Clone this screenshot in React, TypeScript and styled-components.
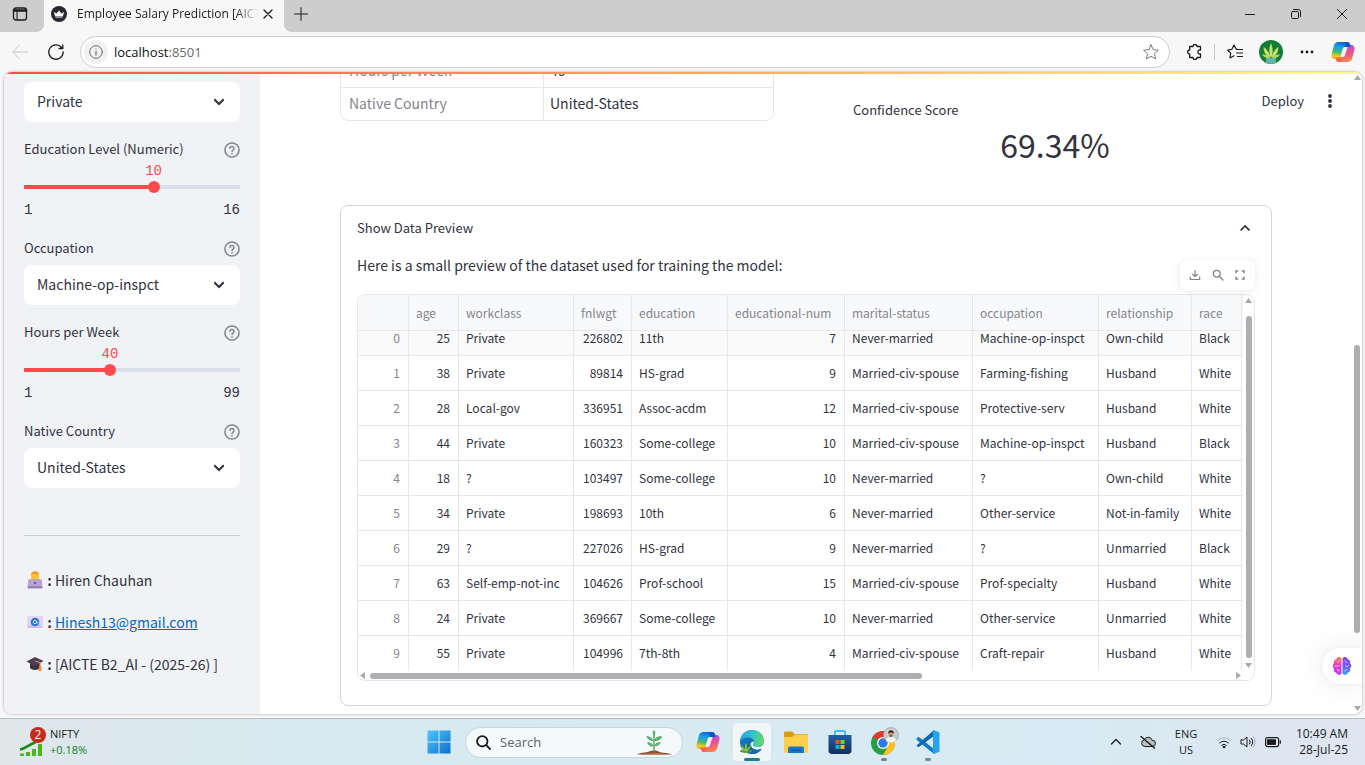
import React, { useLayoutEffect, useRef, useState } from "react";
import styled, { createGlobalStyle, css } from "styled-components";

const appFont = `"Noto Sans CJK JP", "Noto Sans", sans-serif`;
const shellFont = `"Open Sans", "Noto Sans", sans-serif`;
const monoFont = `"Liberation Mono", monospace`;
const ink = "#31333f";

const GlobalStyle = createGlobalStyle`
  *, *::before, *::after { box-sizing: border-box; }
  html, body, #root { height: 100%; }
  body { margin: 0; overflow: hidden; background: #f7f7f7; font-family: ${appFont}; color: ${ink}; }
  button, select, input { font: inherit; color: inherit; }
  button { border: 0; padding: 0; background: none; }
  svg { display: block; flex: none; }
`;

const Screen = styled.div`
  display: flex;
  flex-direction: column;
  height: 100vh;
`;

/* ---------- browser chrome ---------- */

const TabStrip = styled.header`
  display: flex;
  flex: none;
  height: 32px;
  background: #cdcdcd;
  font-family: ${shellFont};
`;

const TabActions = styled.button`
  display: grid;
  place-items: center;
  width: 44px;
  padding: 0 4px 4px 0;
  background: #cdcdcd;
  border-bottom-right-radius: 8px;
`;

const TabBackdrop = styled.div`
  display: flex;
  background: #f7f7f7;
`;

const StripBackdrop = styled(TabBackdrop)`
  flex: 1;
`;

const Tab = styled.div`
  display: flex;
  align-items: center;
  gap: 10px;
  width: 240px;
  padding: 0 8px 4px 7px;
`;

const TabTitle = styled.span`
  flex: 1;
  overflow: hidden;
  margin-right: -8px;
  white-space: nowrap;
  font-size: 12px;
  line-height: 16px;
  color: #1b1b1b;
  mask-image: linear-gradient(to right, #000 88%, transparent);
`;

const TabClose = styled.button`
  display: grid;
  place-items: center;
  width: 16px;
  height: 16px;
`;

const StripRest = styled.div`
  display: flex;
  flex: 1;
  justify-content: space-between;
  background: #cdcdcd;
  border-bottom-left-radius: 8px;
`;

const StripButton = styled.button<{ $wide?: boolean }>`
  display: grid;
  place-items: center;
  width: ${(p) => (p.$wide ? 46 : 34)}px;
  height: 28px;
`;

const WindowButtons = styled.div`
  display: flex;
`;

const NavBar = styled.nav`
  display: flex;
  flex: none;
  align-items: center;
  height: 40px;
  padding: 0 4px 0 2px;
  font-family: ${shellFont};
`;

const NavButton = styled.button`
  display: grid;
  place-items: center;
  flex: none;
  width: 36px;
  height: 32px;
`;

const Omnibox = styled.div`
  display: flex;
  flex: 1;
  align-items: center;
  height: 32px;
  margin: 0 7px 0 6px;
  padding: 0 10px 0 3px;
  border: 1px solid #cfcfcf;
  border-radius: 16px;
  background: #fff;
`;

const SiteInfo = styled.button`
  display: grid;
  place-items: center;
  width: 24px;
  height: 24px;
  border-radius: 12px;
  background: #f1f1f1;
`;

const Address = styled.span`
  flex: 1;
  margin-left: 6px;
  font-size: 13px;
  line-height: 20px;
  color: #101010;
  span { color: #6a6a6a; }
`;

const Divider = styled.span`
  width: 1px;
  height: 16px;
  margin: 0 2px 0 1px;
  background: #c8c8c8;
`;

/* ---------- page frame ---------- */

const Page = styled.div`
  position: relative;
  display: flex;
  flex-direction: column;
  flex: 1;
  min-height: 0;
  margin: 0 3px 4px 4px;
  border-radius: 8px;
  overflow: hidden;
  background: #fff;
  box-shadow: 0 0 2px 1px #cdcdcd;
`;

const TopStripe = styled.div`
  flex: none;
  height: 2px;
  background: linear-gradient(90deg, #ff4b4b, #fffd80);
`;

const PageColumns = styled.div`
  display: flex;
  flex: 1;
  min-height: 0;
`;

/* ---------- sidebar ---------- */

const Sidebar = styled.aside`
  flex: none;
  width: 256px;
  padding: 8px 20px;
  overflow: hidden;
  background: #f0f2f6;
`;

const FieldLabel = styled.div`
  display: flex;
  align-items: center;
  justify-content: space-between;
  height: 20px;
  font-size: 13px;
  line-height: 18px;
  label { padding-bottom: 2px; }
`;

const HelpButton = styled.button`
  width: 16px;
  height: 16px;
`;

const SelectWrap = styled.div`
  position: relative;
  margin-bottom: 18px;
  ${FieldLabel} + & { margin-top: 6px; }
  svg { position: absolute; right: 16px; top: 15px; pointer-events: none; }
`;

const Select = styled.select`
  display: block;
  width: 100%;
  height: 40px;
  padding: 0 40px 2px 13px;
  appearance: none;
  border: 0;
  border-radius: 8px;
  background: #fff;
  font-size: 14px;
`;

const SliderBox = styled.div`
  height: 59px;
  margin-bottom: 20px;
  padding-top: 3px;
  font-family: ${monoFont};
  font-size: 14px;
`;

const SliderValue = styled.output<{ $at: number }>`
  display: block;
  width: 40px;
  margin-left: calc(${(p) => p.$at}% - 20px);
  line-height: 16px;
  text-align: center;
  color: #ff4b4b;
`;

const SliderRail = styled.div<{ $at: number }>`
  margin: 2px 0 7px;
  height: 12px;
  border-radius: 2px;
  background: linear-gradient(to right, #ff4b4b ${(p) => p.$at}%, #d8dfe8 ${(p) => p.$at}%) center / 100% 4px no-repeat;
`;

const Range = styled.input`
  display: block;
  width: calc(100% + 12px);
  height: 12px;
  margin: 0 -6px;
  appearance: none;
  background: transparent;
  &::-webkit-slider-thumb {
    appearance: none;
    width: 12px;
    height: 12px;
    border-radius: 6px;
    background: #ff4b4b;
  }
`;

const SliderEnds = styled.div`
  display: flex;
  justify-content: space-between;
  line-height: 20px;
`;

const Rule = styled.hr`
  margin: 47px 0 32px;
  border: 0;
  border-top: 1px solid #c9cbd1;
`;

const Credit = styled.p`
  display: flex;
  align-items: center;
  margin: 0 0 18px;
  font-size: 14px;
  line-height: 24px;
  white-space: pre;
  svg { margin-left: 2px; }
  a { color: #0068c9; text-decoration: underline; }
`;

/* ---------- main column ---------- */

const Main = styled.main`
  position: relative;
  display: flex;
  flex: 1;
  min-width: 0;
  overflow: hidden;
`;

const MainContent = styled.div`
  flex: 1;
  min-width: 0;
  margin-top: -20px;
  padding: 0 80px;
`;

const TwoColumns = styled.div`
  display: grid;
  grid-template-columns: 1fr 1fr;
  gap: 64px;
`;

const SummaryTable = styled.table`
  width: 100%;
  align-self: start;
  border: 1px solid #e6e7e9;
  border-radius: 8px;
  border-spacing: 0;
  font-size: 14px;
  line-height: 30px;
  th {
    width: 203px;
    padding: 0 8px 2px;
    border-right: 1px solid #e6e7e9;
    font-weight: 400;
    text-align: left;
    color: #84858c;
  }
  td { padding: 0 6px 2px; }
  tr + tr > * { border-top: 1px solid #e6e7e9; }
`;

const Metric = styled.div`
  padding: 46px 15px 0;
`;

const MetricLabel = styled.div`
  font-size: 13px;
  line-height: 20px;
`;

const MetricValue = styled.div`
  margin-top: 2px;
  font-size: 32px;
  line-height: 44px;
  text-align: center;
`;

const Expander = styled.details`
  margin-top: 39px;
  padding: 0 16px 24px;
  border: 1px solid #d6d6d9;
  border-radius: 8px;
`;

const ExpanderTitle = styled.summary`
  display: flex;
  align-items: center;
  justify-content: space-between;
  height: 44px;
  padding-right: 4px;
  list-style: none;
  font-size: 13px;
  line-height: 20px;
`;

const Intro = styled.p`
  margin: 3px 0 17px;
  font-size: 14px;
  line-height: 24px;
`;

const FrameShell = styled.div`
  position: relative;
  display: grid;
  grid-template-columns: minmax(0, 1fr) 11px;
  grid-template-rows: 376px 9px;
  border: 1px solid #e6e7e9;
  border-radius: 8px;
`;

const FrameTools = styled.div`
  position: absolute;
  right: -1px;
  top: -35px;
  display: flex;
  align-items: center;
  justify-content: space-between;
  width: 75px;
  height: 30px;
  padding: 0 8px;
  border-radius: 8px;
  background: #fff;
  box-shadow: 0 1px 8px rgba(49, 51, 63, 0.1);
`;

const ToolButton = styled.button`
  display: grid;
  place-items: center;
  width: 14px;
  height: 20px;
`;

const TableScroller = styled.div`
  overflow: hidden;
  border-top-left-radius: 8px;
`;

const DataTable = styled.table`
  table-layout: fixed;
  width: 960px;
  border-spacing: 0;
  font-size: 12px;
`;

const cell = css`
  height: 35px;
  padding: 0 8px 0 7px;
  border-right: 1px solid #e6e7ea;
  border-bottom: 1px solid #e6e7ea;
  font-weight: 400;
  line-height: 20px;
  text-align: left;
  white-space: nowrap;
`;

const HeadCell = styled.th`
  ${cell}
  position: sticky;
  top: 0;
  height: 36px;
  background: #f8f9fb;
  color: #84858c;
`;

const IndexCell = styled.th`
  ${cell}
  text-align: right;
  color: #84858c;
`;

const BodyCell = styled.td<{ $num?: boolean }>`
  ${cell}
  text-align: ${(p) => (p.$num ? "right" : "left")};
`;

const BodyRow = styled.tr`
  &:first-child > * { background: #fafafa; }
  &:last-child > * { border-bottom-color: transparent; }
`;

const Scrollbar = styled.div<{ $row?: boolean }>`
  display: flex;
  flex: none;
  flex-direction: ${(p) => (p.$row ? "row" : "column")};
  align-items: center;
  padding: ${(p) => (p.$row ? "0 1px" : "2px 0")};
  gap: 4px;
`;

const Track = styled.div<{ $row?: boolean }>`
  display: flex;
  flex: 1;
  flex-direction: ${(p) => (p.$row ? "row" : "column")};
`;

const Thumb = styled.span<{ $grow: number; $row?: boolean }>`
  flex: ${(p) => p.$grow} 0 0;
  ${(p) => (p.$row ? "height: 6px;" : "width: 6px;")}
  border-radius: 3px;
  background: #aeadb2;
`;

const Spare = styled.span<{ $grow: number }>`
  flex: ${(p) => p.$grow} 0 0;
`;

const PageScroll = styled(Scrollbar)`
  width: 10px;
  padding: 0 0 2px;
`;

const AppHeader = styled.div`
  position: absolute;
  top: 11px;
  right: 24px;
  display: flex;
  align-items: center;
  gap: 18px;
  font-size: 13px;
`;

const HeaderButton = styled.button`
  line-height: 32px;
`;

const Assistant = styled.button`
  position: absolute;
  right: 0;
  bottom: 30px;
  display: flex;
  align-items: center;
  width: 40px;
  height: 36px;
  padding-left: 10px;
  border-radius: 18px 0 0 18px;
  background: #fff;
  box-shadow: 0 0 30px rgba(0, 0, 0, 0.09), 0 0 4px rgba(0, 0, 0, 0.05);
`;

/* ---------- taskbar ---------- */

const Taskbar = styled.footer`
  display: grid;
  grid-template-columns: 1fr auto 1fr;
  align-items: center;
  flex: none;
  height: 47px;
  border-top: 1px solid #b3bec4;
  background: linear-gradient(90deg, #dfe7e9, #d7e9f0 20%, #d8eaf3 80%, #dfe5f0);
  font-family: ${shellFont};
  font-size: 12px;
  line-height: 16px;
  color: #1b1b1b;
`;

const Widget = styled.button`
  display: flex;
  align-items: center;
  gap: 4px;
  padding-left: 18px;
  text-align: left;
`;

const WidgetText = styled.span`
  display: grid;
  font-size: 11px;
  span { color: #12801c; }
`;

const Apps = styled.div`
  display: flex;
  align-items: center;
  margin-left: 2px;
`;

const AppButton = styled.button<{ $active?: boolean; $open?: boolean }>`
  position: relative;
  display: grid;
  place-items: center;
  width: 38px;
  height: 38px;
  margin: 0 3px;
  border-radius: 4px;
  ${(p) => p.$active && "background: #f0f6fa; box-shadow: 0 0 1px 1px #dde6ea;"}
  ${(p) =>
    (p.$active || p.$open) &&
    css`
      &::after {
        content: "";
        position: absolute;
        bottom: 0;
        width: ${p.$active ? 16 : 6}px;
        height: 3px;
        border-radius: 2px;
        background: ${p.$active ? "#1b7f93" : "#7c8488"};
      }
    `}
`;

const SearchBox = styled.label`
  display: flex;
  align-items: center;
  width: 218px;
  height: 31px;
  margin: 0 3px 0 4px;
  padding: 0 8px 0 10px;
  border: 1px solid #c4d4db;
  border-radius: 16px;
  background: #f4f9fb;
`;

const SearchInput = styled.input`
  flex: 1;
  min-width: 0;
  margin-left: 9px;
  padding: 0;
  border: 0;
  background: none;
  font-size: 13px;
  &::placeholder { color: #5d6366; opacity: 1; }
`;

const Tray = styled.div`
  display: flex;
  align-items: center;
  justify-content: flex-end;
  padding-right: 17px;
  text-align: center;
`;

const TrayButton = styled.button<{ $w: number }>`
  display: grid;
  place-items: center;
  width: ${(p) => p.$w}px;
  height: 38px;
`;

const TrayText = styled.button<{ $w: number; $right?: boolean }>`
  display: grid;
  width: ${(p) => p.$w}px;
  font-size: ${(p) => (p.$right ? 12 : 11)}px;
  text-align: ${(p) => (p.$right ? "right" : "center")};
`;

/* ---------- icons ---------- */

type IconProps = {
  size?: number;
  color?: string;
  width?: number;
  children: React.ReactNode;
  box?: number;
};

const Icon = ({ size = 16, color = "#1b1b1b", width = 1, box = 16, children }: IconProps) => (
  <svg
    width={size}
    height={size}
    viewBox={`0 0 ${box} ${box}`}
    fill="none"
    stroke={color}
    strokeWidth={width}
    strokeLinecap="round"
    strokeLinejoin="round"
    aria-hidden="true"
  >
    {children}
  </svg>
);

const Arrow = ({ dir }: { dir: "up" | "down" | "left" | "right" }) => {
  const d = {
    up: "M3.5 1 7 6H0z",
    down: "M0 1h7L3.5 6z",
    left: "M6 0v7L1 3.5z",
    right: "M1 0v7l5-3.5z",
  }[dir];
  return (
    <svg width="7" height="7" viewBox="0 0 7 7" aria-hidden="true">
      <path d={d} fill="#a9a8ad" />
    </svg>
  );
};

const Help = () => (
  <Icon box={24} width={2.3} color="#84868f">
    <circle cx="12" cy="12" r="10.6" />
    <path d="M8.800 9.300a3.200 3.200 0 0 1 6.300.6c0 2-3 2.600-3 4.300" />
    <path d="M12 17.700h.01" strokeWidth="2.6" />
  </Icon>
);

const Chevron = ({ up }: { up?: boolean }) => (
  <Icon size={up ? 12 : 10} box={10} color={ink} width={up ? 1.4 : 2}>
    <path d={up ? "M1.8 6.5 5 3.3l3.200 3.200" : "M1 3l4 4 4-4"} strokeLinecap="square" strokeLinejoin="miter" />
  </Icon>
);

const Copilot = ({ id }: { id: string }) => {
  const ribbon =
    "M7.600 2h8.300c1.500 0 2.400.8 2.900 2.300L19.700 7h-2.900c-1.900 0-2.900.9-3.400 2.700l-1.900 6.200c-.6 2.100-1.600 3.300-3.700 3.300H4.200C1.300 19.200-.1 17 .6 14.200l2.300-8.700C3.600 3.200 5.100 2 7.600 2z";
  return (
    <svg width="24" height="24" viewBox="0 0 24 24" aria-hidden="true">
      <defs>
        <linearGradient id={`${id}a`} x1=".5" y1="0" x2=".3" y2="1">
          <stop offset="0" stopColor="#1462d6" />
          <stop offset=".3" stopColor="#18a3e6" />
          <stop offset=".6" stopColor="#45b96a" />
          <stop offset=".85" stopColor="#f3cf1f" />
          <stop offset="1" stopColor="#f7a51f" />
        </linearGradient>
        <linearGradient id={`${id}b`} x1=".6" y1="1" x2=".4" y2="0">
          <stop offset="0" stopColor="#a955ef" />
          <stop offset=".5" stopColor="#f04f8a" />
          <stop offset="1" stopColor="#f7894a" />
        </linearGradient>
      </defs>
      <path d={ribbon} fill={`url(#${id}b)`} transform="rotate(180 12 12)" />
      <path d={ribbon} fill={`url(#${id}a)`} />
      <path d="M14 2h2c1.500 0 2.300.8 2.800 2.300L19.700 7h-2.900c-1.900 0-2.900.9-3.400 2.500z" fill="#1254bb" />
      <path d="M10 22H8c-1.500 0-2.300-.8-2.800-2.300L4.600 17.400h2.600c1.900 0 2.900-.9 3.400-2.700z" fill="#f2664e" />
      <path d="M9.300 16.700l2.400-8c.5-1.400 1.500-2 3.300-1.700h1.600l-2.600 8.300c-.5 1.400-1.600 2-3.200 1.700z" fill="#fff" opacity=".9" />
    </svg>
  );
};

const EdgeLogo = () => (
  <svg width="26" height="26" viewBox="0 0 26 26" aria-hidden="true">
    <defs>
      <linearGradient id="edgeTop" x1="0" y1=".4" x2="1" y2=".5">
        <stop offset="0" stopColor="#2c9fe2" />
        <stop offset=".5" stopColor="#31c3cf" />
        <stop offset="1" stopColor="#66da5d" />
      </linearGradient>
      <linearGradient id="edgeLow" x1="0" y1="0" x2="1" y2="1">
        <stop offset="0" stopColor="#1687cf" />
        <stop offset="1" stopColor="#0f5299" />
      </linearGradient>
    </defs>
    <circle cx="13" cy="13" r="12" fill="url(#edgeLow)" />
    <path d="M1 12.500C1.500 5.800 6.500 1 13 1c7 0 12 5 12 10.500 0 4-3 6.500-6.500 6.500-3 0-4.500-1-4.500-2 0-.8 1-1.200 1-3 0-2.500-2.300-4.600-5.700-4.600C5.200 8.400 2 10 1 12.500z" fill="url(#edgeTop)" />
    <path d="M14 16c0 1 1.500 2 4.500 2 3.500 0 6.500-2 6.500-6v9l-3.500-1c-2 .8-4.500 1-6.200.1-2.600-1-4.300-3.600-3.800-5.200.4-1.300 1.500-2.400 3-2.400.8 1.500-.5 2.700-.5 3.500z" fill="#e9f5fa" />
    <path d="M11 12c-1 4 1.500 8 6 9 1.800.3 3.800 0 5.500-1C19 25 14 26 11 24c-3-3-3-9 0-12z" fill="#1565b0" />
    <g stroke="#4f9a2f" strokeWidth="2" strokeLinecap="round">
      <path d="M7 22v-7M6 21l-3.500-4M8 21l3.500-4M6 23l-4-1M8 23l4-1" />
    </g>
    <path d="M7 22v-6M6 21.500l-2.500-3M8 21.500l2.500-3" stroke="#b8df6a" strokeLinecap="round" />
  </svg>
);

const ExplorerLogo = () => (
  <svg width="26" height="26" viewBox="0 0 26 26" aria-hidden="true">
    <path d="M1 4c0-1 .6-1.500 1.500-1.500H9l2.500 2.500H24c.7 0 1 .4 1 1v4H1z" fill="#dc9a12" />
    <path d="M1 8h8.500L12 5.500h12c.6 0 1 .4 1 1v16c0 .8-.5 1.300-1.300 1.300H2.300C1.500 23.800 1 23.300 1 22.500z" fill="#fdcf4a" />
    <path d="M5 24v-4.500c0-1.300.9-2 2-2h12c1.200 0 2 .8 2 2V24z" fill="#1477c9" />
    <path d="M8 21h10" stroke="#0e5da6" strokeWidth="1.500" />
  </svg>
);

const StoreLogo = () => (
  <svg width="26" height="26" viewBox="0 0 26 26" aria-hidden="true">
    <defs>
      <linearGradient id="bag" x1="0" y1="0" x2="0" y2="1">
        <stop offset="0" stopColor="#2262a0" />
        <stop offset="1" stopColor="#123059" />
      </linearGradient>
    </defs>
    <path d="M8 7V3.500C8 2.700 8.500 2 9.500 2h7c1 0 1.500.7 1.500 1.500V7" fill="none" stroke="#42bdf0" strokeWidth="2" />
    <path d="M1.500 6h23v15.500c0 2-1.300 3.500-3.500 3.500H5c-2.200 0-3.500-1.500-3.500-3.500z" fill="url(#bag)" />
    <path d="M8.500 11h4v4h-4z" fill="#f1511b" />
    <path d="M13.500 11h4v4h-4z" fill="#80cc28" />
    <path d="M8.500 16h4v4h-4z" fill="#00adef" />
    <path d="M13.500 16h4v4h-4z" fill="#fbbc09" />
  </svg>
);

const ChromeLogo = () => (
  <svg width="30" height="30" viewBox="0 0 30 30" aria-hidden="true">
    <circle cx="14" cy="16" r="12" fill="#2a9d47" />
    <path d="M14 16 3.600 10A12 12 0 0 1 24.400 10z" fill="#e23b2e" />
    <path d="M14 10h10.400A12 12 0 0 1 14 28l5.200-9z" fill="#fcc31e" />
    <circle cx="14" cy="16" r="6" fill="#fff" />
    <circle cx="14" cy="16" r="4.700" fill="#2f78e8" />
    <circle cx="22" cy="8" r="7.500" fill="#c9cccb" stroke="#8f9796" strokeWidth=".6" />
    <path d="M17 13.500c.5-2.600 2.500-3.400 5-3.400s4.500.8 5 3.400c-2.500 2.700-7.500 2.700-10 0z" fill="#f4f4f2" />
    <circle cx="22" cy="7" r="2.700" fill="#c59478" />
    <path d="M19.200 6.500c-.3-4.300 5.900-4.300 5.600 0-.8-1.500-4.800-1.500-5.600 0zM20.500 8.500h3l-1.500 1.500z" fill="#2b2422" />
  </svg>
);

const CodeLogo = () => (
  <svg width="26" height="26" viewBox="0 0 26 26" aria-hidden="true">
    <path d="M1.500 9.500 3.500 7.800 19 20v5L1.500 10.800z" fill="#0f7cc4" />
    <path d="M1.500 16.500 19 1v6L3.500 18.200z" fill="#0a69ae" />
    <path d="M19 1l5.500 2.500v19L19 25l-1-1V2z" fill="#27a3ee" />
  </svg>
);

const StartLogo = () => (
  <svg width="24" height="24" viewBox="0 0 24 24" aria-hidden="true">
    <defs>
      <linearGradient id="win" x1="0" y1="0" x2="24" y2="24" gradientUnits="userSpaceOnUse">
        <stop offset="0" stopColor="#4fc9fb" />
        <stop offset="1" stopColor="#0a6ccf" />
      </linearGradient>
    </defs>
    <path d="M.5.500h11v11H.5zM12.500.500h11v11h-11zM.5 12.500h11v11H.5zM12.500 12.500h11v11h-11z" fill="url(#win)" />
  </svg>
);

const Sprout = () => (
  <svg width="38" height="26" viewBox="0 0 38 26" aria-hidden="true">
    <path d="M1 25.500c3-2 9-1.500 12-3 3-1.500 8-1.200 10 .3 3 1.500 9 .7 13 2.700z" fill="#8c4f31" />
    <path d="M4 25.500c4-1.300 9-.8 12-1.500 5-1 10 .3 16 1.500z" fill="#b06b43" />
    <path d="M18 23V6" stroke="#3f8f4a" strokeWidth="1.200" />
    <path d="M18 7.500c-2-2.200-1.600-4.400 0-6.500 1.600 2.100 2 4.300 0 6.500zM17.300 12c-3.500 0-5.600-1.800-7-5 3.800.5 6.500 2 7 5zM18.700 12c0-3 2.600-5 7.300-4.800-1 3.100-3.500 4.900-7.300 4.800zM17.300 17.500c-3 .3-5-1.200-6.300-4.200 3.700-.3 5.800 1.200 6.300 4.200zM18.700 17c.3-2.800 2.300-4.100 6-3.700-1 2.700-3.200 4.100-6 3.700z" fill="#46a560" />
    <path d="M18 6.500V3M16 10.500l-3.500-2M20 10.700l3.500-2M16 16l-3-1.700M20 15.800l3-1.500" stroke="#8fd39b" strokeWidth=".7" />
  </svg>
);

const Stocks = () => (
  <svg width="28" height="32" viewBox="0 0 28 32" aria-hidden="true">
    <path d="M2 23.500c6-1 8-4.500 16-7.500" fill="none" stroke="#1f8a1b" strokeWidth="2.500" />
    <path d="M2 27.500h4V30H2zM8 26h4v4H8zM14 23h4v7h-4zM20 18h4v12h-4z" fill="#4bb51d" />
    <circle cx="20" cy="9" r="8" fill="#c42b1c" />
    <text x="20" y="13" textAnchor="middle" fontSize="12" fontFamily="Open Sans, sans-serif" fill="#fff">2</text>
  </svg>
);

const Brain = () => (
  <svg width="20" height="20" viewBox="0 0 20 20" aria-hidden="true">
    <defs>
      <linearGradient id="lobeL" x1="0" y1="0" x2="0" y2="1">
        <stop offset="0" stopColor="#f7884f" />
        <stop offset=".45" stopColor="#ea35c8" />
        <stop offset="1" stopColor="#b63df2" />
      </linearGradient>
      <linearGradient id="lobeR" x1="0" y1="0" x2="0" y2="1">
        <stop offset="0" stopColor="#8d44e8" />
        <stop offset=".55" stopColor="#6a5cf5" />
        <stop offset="1" stopColor="#30a0f8" />
      </linearGradient>
    </defs>
    <path d="M9.500 2.500C8 .3 4.700.8 4.300 3.200 2.200 3.600 1.300 5.500 2 7.300.2 8.600.2 11.300 2 12.600c-.7 2 .4 3.900 2.300 4.200.7 2.400 3.900 2.800 5.200.7z" fill="url(#lobeL)" />
    <path d="M10.500 2.500c1.500-2.200 4.800-1.700 5.200.7 2.100.4 3 2.300 2.300 4.100 1.800 1.300 1.800 4 0 5.300.7 2-.4 3.900-2.300 4.200-.7 2.400-3.900 2.800-5.200.7z" fill="url(#lobeR)" />
    <path d="M2 10h5.500M5 6.500c1.500 0 2-.8 2-2M5 13.500c1.500 0 2 .8 2 2M13 4.500c0 1.500 1 2.200 2.500 1.800M13 9.500l2 1.500 2-2M13 15.500c0-1.500 1-2.200 2.500-1.800" stroke="#fff" strokeWidth=".8" fill="none" opacity=".85" />
  </svg>
);

const TechEmoji = () => (
  <svg width="18" height="18" viewBox="0 0 18 18" aria-hidden="true">
    <path d="M3 10c0-2 2-3 6-3s6 1 6 3v5H3z" fill="#d8b45a" />
    <circle cx="9" cy="4.5" r="4" fill="#fcc22f" />
    <path d="M5 4c0-5 8-5 8 0-1-1.500-7-1.500-8 0z" fill="#e79a2b" />
    <path d="M2 9.500c0-.6.4-1 1-1h12c.6 0 1 .4 1 1V15H2z" fill="#b7a3d4" />
    <path d="M1.500 15h15v1.500c0 .6-.4 1-1 1h-13c-.6 0-1-.4-1-1z" fill="#9583b8" />
    <circle cx="9" cy="12" r="1.2" fill="#6f5f96" />
  </svg>
);

const MailEmoji = () => (
  <svg width="18" height="18" viewBox="0 0 18 18" aria-hidden="true">
    <rect x="1" y="3" width="16" height="12" rx="1" fill="#e3d6ee" />
    <path d="M1 15l6-6h4l6 6z" fill="#cfc0e2" />
    <circle cx="9" cy="9" r="4.3" fill="#2f78d6" />
    <circle cx="9" cy="9" r="1.7" fill="none" stroke="#cfe2fb" />
    <path d="M10.700 8v1.500c0 1 1.500 1 1.500-.5" fill="none" stroke="#cfe2fb" strokeWidth=".8" />
  </svg>
);

const CapEmoji = () => (
  <svg width="18" height="18" viewBox="0 0 18 18" aria-hidden="true">
    <path d="M4 8v5c2 2.500 8 2.500 10 0V8z" fill="#3d2f45" />
    <path d="M9 2l8.500 4L9 11 .5 6.500z" fill="#4d3d57" />
    <path d="M9 6l5 1.500V11" fill="none" stroke="#e08a3c" strokeWidth="1.2" />
    <path d="M13 11h2l.6 5h-3z" fill="#f08a3a" />
  </svg>
);

/* ---------- data ---------- */

const columns = [
  { name: "age", width: 50, num: true },
  { name: "workclass", width: 115 },
  { name: "fnlwgt", width: 58, num: true },
  { name: "education", width: 96 },
  { name: "educational-num", width: 117, num: true },
  { name: "marital-status", width: 128 },
  { name: "occupation", width: 126 },
  { name: "relationship", width: 93 },
  { name: "race", width: 50 },
];

const rows: (string | number)[][] = [
  [25, "Private", 226802, "11th", 7, "Never-married", "Machine-op-inspct", "Own-child", "Black"],
  [38, "Private", 89814, "HS-grad", 9, "Married-civ-spouse", "Farming-fishing", "Husband", "White"],
  [28, "Local-gov", 336951, "Assoc-acdm", 12, "Married-civ-spouse", "Protective-serv", "Husband", "White"],
  [44, "Private", 160323, "Some-college", 10, "Married-civ-spouse", "Machine-op-inspct", "Husband", "Black"],
  [18, "?", 103497, "Some-college", 10, "Never-married", "?", "Own-child", "White"],
  [34, "Private", 198693, "10th", 6, "Never-married", "Other-service", "Not-in-family", "White"],
  [29, "?", 227026, "HS-grad", 9, "Never-married", "?", "Unmarried", "Black"],
  [63, "Self-emp-not-inc", 104626, "Prof-school", 15, "Married-civ-spouse", "Prof-specialty", "Husband", "White"],
  [24, "Private", 369667, "Some-college", 10, "Never-married", "Other-service", "Unmarried", "White"],
  [55, "Private", 104996, "7th-8th", 4, "Married-civ-spouse", "Craft-repair", "Husband", "White"],
];

/* ---------- parts ---------- */

const LabelRow = ({ id, text }: { id: string; text: string }) => (
  <FieldLabel>
    <label htmlFor={id}>{text}</label>
    <HelpButton aria-label={`Help for ${text}`}>
      <Help />
    </HelpButton>
  </FieldLabel>
);

const SelectField = ({ id, label, value }: { id: string; label?: string; value: string }) => (
  <>
    {label && <LabelRow id={id} text={label} />}
    <SelectWrap>
      <Select id={id} defaultValue={value} aria-label={label ? undefined : "Workclass"}>
        <option>{value}</option>
      </Select>
      <Chevron />
    </SelectWrap>
  </>
);

const SliderField = ({ id, label, start, max }: { id: string; label: string; start: number; max: number }) => {
  const [value, setValue] = useState(start);
  const at = ((value - 1) / (max - 1)) * 100;
  return (
    <>
      <LabelRow id={id} text={label} />
      <SliderBox>
        <SliderValue $at={at} htmlFor={id}>{value}</SliderValue>
        <SliderRail $at={at}>
          <Range id={id} type="range" min={1} max={max} value={value} onChange={(e) => setValue(Number(e.target.value))} />
        </SliderRail>
        <SliderEnds>
          <span>1</span>
          <span>{max}</span>
        </SliderEnds>
      </SliderBox>
    </>
  );
};

const DataPreview = () => {
  const scroller = useRef<HTMLDivElement>(null);
  useLayoutEffect(() => {
    if (scroller.current) scroller.current.scrollTop = scroller.current.scrollHeight;
  }, []);
  return (
    <FrameShell>
      <TableScroller ref={scroller}>
        <DataTable>
          <colgroup>
            <col width={51} />
            {columns.map((c) => <col key={c.name} width={c.width} />)}
            <col />
          </colgroup>
          <thead>
            <tr>
              <HeadCell aria-label="Row" />
              {columns.map((c) => <HeadCell key={c.name} scope="col">{c.name}</HeadCell>)}
              <HeadCell />
            </tr>
          </thead>
          <tbody>
            {rows.map((row, i) => (
              <BodyRow key={i}>
                <IndexCell scope="row">{i}</IndexCell>
                {row.map((v, j) => <BodyCell key={j} $num={columns[j].num}>{v}</BodyCell>)}
                <BodyCell />
              </BodyRow>
            ))}
          </tbody>
        </DataTable>
      </TableScroller>
      <Scrollbar>
        <Arrow dir="up" />
        <Track>
          <Spare $grow={8} />
          <Thumb $grow={342} />
        </Track>
        <Arrow dir="down" />
      </Scrollbar>
      <Scrollbar $row>
        <Arrow dir="left" />
        <Track $row>
          <Thumb $row $grow={553} />
          <Spare $grow={309} />
        </Track>
        <Arrow dir="right" />
      </Scrollbar>
      <FrameTools>
        <ToolButton aria-label="Download">
          <Icon size={12} box={12} color="#7f8088" width={1.2}>
            <path d="M6 1.500v6M3.500 5.200 6 7.700l2.500-2.500M1.300 8v2.500h9.400V8" />
          </Icon>
        </ToolButton>
        <ToolButton aria-label="Search">
          <Icon size={12} box={12} color="#7f8088" width={1.3}>
            <circle cx="4.7" cy="4.7" r="3.4" />
            <path d="M7.300 7.300 11 11" />
          </Icon>
        </ToolButton>
        <ToolButton aria-label="Fullscreen">
          <Icon size={12} box={12} color="#7f8088" width={1.4}>
            <path d="M2 4.200V2h2.200M7.800 2H10v2.200M10 7.800V10H7.800M4.200 10H2V7.800" strokeLinecap="butt" strokeLinejoin="miter" />
          </Icon>
        </ToolButton>
      </FrameTools>
    </FrameShell>
  );
};

const BrowserChrome = () => (
  <>
    <TabStrip>
      <TabBackdrop>
        <TabActions aria-label="Tab actions">
          <Icon>
            <rect x="1.5" y="2" width="13" height="12" rx="2.5" strokeWidth="1.3" />
            <path d="M2 4.500h12" strokeWidth="2.5" />
            <path d="M5 5v8.500" />
          </Icon>
        </TabActions>
        <Tab>
          <svg width="16" height="16" viewBox="0 0 16 16" aria-hidden="true">
            <circle cx="8" cy="8" r="8" fill="#262730" />
            <path d="M2.800 6l2.800 1.600L8 4.600l2.400 3L13.200 6l-1.400 4.500H4.200z" fill="#fff" />
            <path d="M4.500 11.500h7" stroke="#9a9aa2" />
          </svg>
          <TabTitle>Employee Salary Prediction [AICTE</TabTitle>
          <TabClose aria-label="Close tab">
            <Icon size={10} box={10} width={1.3}>
              <path d="M1 1l8 8M9 1 1 9" />
            </Icon>
          </TabClose>
        </Tab>
      </TabBackdrop>
      <StripBackdrop>
        <StripRest>
          <StripButton aria-label="New tab">
            <Icon size={14} box={14}>
              <path d="M7 .500v13M.5 7h13" />
            </Icon>
          </StripButton>
          <WindowButtons>
            <StripButton $wide aria-label="Minimize">
              <Icon size={10} box={10}><path d="M0 5.500h10" strokeLinecap="butt" /></Icon>
            </StripButton>
            <StripButton $wide aria-label="Restore">
              <Icon size={10} box={10}>
                <rect x=".5" y="2.5" width="7" height="7" rx="1.2" />
                <path d="M2.500.500h5a2 2 0 0 1 2 2v5" />
              </Icon>
            </StripButton>
            <StripButton $wide aria-label="Close">
              <Icon size={10} box={10}><path d="M.3.300l9.400 9.400M9.700.300.3 9.700" /></Icon>
            </StripButton>
          </WindowButtons>
        </StripRest>
      </StripBackdrop>
    </TabStrip>
    <NavBar>
      <NavButton aria-label="Back">
        <Icon color="#c4c4c4"><path d="M15.500 8H1M7 1.500.7 8 7 14.500" /></Icon>
      </NavButton>
      <NavButton aria-label="Reload">
        <Icon width={1.3}>
          <path d="M15.200 8A7.200 7.200 0 1 1 13.600 3.500M14.800.800v3.700h-3.700" />
        </Icon>
      </NavButton>
      <Omnibox>
        <SiteInfo aria-label="Site information">
          <Icon size={14} box={14} color="#6b6b6b">
            <circle cx="7" cy="7" r="6.3" />
            <path d="M7 6.300V10M7 4h.01" strokeWidth="1.2" />
          </Icon>
        </SiteInfo>
        <Address>localhost<span>:8501</span></Address>
        <Icon color="#7a7a7a">
          <path d="M8 .800l2.200 4.800 5.200.6-3.900 3.500 1.100 5.200L8 12.300l-4.600 2.600 1.100-5.200L.6 6.200l5.200-.6z" />
        </Icon>
      </Omnibox>
      <NavButton aria-label="Extensions">
        <Icon width={1.3}>
          <path d="M6 2.500a2 2 0 0 1 4 0h3.500V6c-3.500-.8-3.500 4.800 0 4v3.500H10a2 2 0 0 1-4 0H2.700V10a2 2 0 0 1 0-4V2.500z" />
        </Icon>
      </NavButton>
      <Divider />
      <NavButton aria-label="Favorites">
        <Icon width={1.2}>
          <path d="M9 4.800 7 1 4.900 5.300.6 6l3.100 3.200L3 14l4-2.200M9 4.800h.5M9.500 5.500H16M9.500 9H16M10.500 12.500H16" />
        </Icon>
      </NavButton>
      <NavButton aria-label="Profile">
        <svg width="24" height="24" viewBox="0 0 24 24" aria-hidden="true">
          <circle cx="12" cy="12" r="12" fill="#117d38" />
          <path d="M12 18C9.500 13 10 7 12 3c2 4 2.500 10 0 15zM11 18C7 16 4.500 12 4.500 7 8 9 11 13 11 18zM13 18c4-2 6.500-6 6.500-11C16 9 13 13 13 18zM10 18c-3 .5-5.500-1-7-3.500 3-.5 6 .8 7 3.500zM14 18c3 .5 5.500-1 7-3.500-3-.5-6 .8-7 3.500z" fill="#b9d65c" />
          <path d="M12 17V7M10.500 16 6 10M13.500 16 18 10" stroke="#e7f0a5" strokeWidth=".8" />
          <path d="M7 18h10v4.800a12 12 0 0 1-10 0z" fill="#62b5ab" />
        </svg>
      </NavButton>
      <NavButton aria-label="Settings and more">
        <svg width="14" height="4" viewBox="0 0 14 4" aria-hidden="true">
          <circle cx="2" cy="2" r="1.4" fill="#1b1b1b" />
          <circle cx="7" cy="2" r="1.4" fill="#1b1b1b" />
          <circle cx="12" cy="2" r="1.4" fill="#1b1b1b" />
        </svg>
      </NavButton>
      <NavButton aria-label="Copilot">
        <Copilot id="navCopilot" />
      </NavButton>
    </NavBar>
  </>
);

const SystemBar = () => (
  <Taskbar>
    <Widget>
      <Stocks />
      <WidgetText>
        NIFTY
        <span>+0.18%</span>
      </WidgetText>
    </Widget>
    <Apps>
      <AppButton aria-label="Start"><StartLogo /></AppButton>
      <SearchBox>
        <Icon size={15} box={15} width={1.8}>
          <circle cx="6.3" cy="6.3" r="5.2" />
          <path d="M10.200 10.200 14 14" />
        </Icon>
        <SearchInput placeholder="Search" aria-label="Search" />
        <Sprout />
      </SearchBox>
      <AppButton aria-label="Copilot"><Copilot id="barCopilot" /></AppButton>
      <AppButton aria-label="Edge" $active><EdgeLogo /></AppButton>
      <AppButton aria-label="File Explorer"><ExplorerLogo /></AppButton>
      <AppButton aria-label="Store"><StoreLogo /></AppButton>
      <AppButton aria-label="Chrome" $open><ChromeLogo /></AppButton>
      <AppButton aria-label="Code" $open><CodeLogo /></AppButton>
    </Apps>
    <Tray>
      <TrayButton $w={32} aria-label="Hidden icons">
        <Icon size={12} box={12} width={1.3}><path d="M1.500 8 6 3.500 10.500 8" /></Icon>
      </TrayButton>
      <TrayButton $w={32} aria-label="Cloud sync off">
        <Icon>
          <path d="M4.500 12.500a3.300 3.300 0 0 1-.3-6.500 4.200 4.200 0 0 1 8 .3 3.100 3.100 0 0 1 .3 6.200z" fill="#b9bec1" />
          <path d="M1 2.500l13.500 11.500" strokeWidth="1.4" />
        </Icon>
      </TrayButton>
      <TrayText $w={44}>
        <span>ENG</span>
        <span>US</span>
      </TrayText>
      <TrayButton $w={32} aria-label="Network">
        <Icon>
          <path d="M1.200 6.500a9.600 9.600 0 0 1 13.600 0" stroke="#aab2b6" />
          <path d="M3.500 8.900a6.400 6.400 0 0 1 9 0M5.700 11.200a3.300 3.300 0 0 1 4.600 0" />
          <circle cx="8" cy="13" r=".9" fill="#1b1b1b" />
        </Icon>
      </TrayButton>
      <TrayButton $w={16} aria-label="Volume">
        <Icon>
          <path d="M1 6v4h2.500L7 13V3L3.500 6zM9.500 6a3 3 0 0 1 0 4M11.300 4.300a5.300 5.300 0 0 1 0 7.400" />
          <path d="M13.200 2.800a7.600 7.600 0 0 1 0 10.400" stroke="#a5adb1" />
        </Icon>
      </TrayButton>
      <TrayButton $w={34} aria-label="Battery">
        <Icon>
          <rect x=".6" y="3.6" width="13" height="9" rx="2" strokeWidth="1.2" />
          <path d="M2.800 5.800h7.700v4.600H2.800z" fill="#1b1b1b" />
          <path d="M15.300 7v2.200" strokeWidth="1.3" />
        </Icon>
      </TrayButton>
      <TrayText $w={58} $right>
        <span>10:49 AM</span>
        <span>28-Jul-25</span>
      </TrayText>
    </Tray>
  </Taskbar>
);

export default function App() {
  return (
    <Screen>
      <GlobalStyle />
      <BrowserChrome />
      <Page>
        <TopStripe />
        <PageColumns>
          <Sidebar>
            <SelectField id="workclass" value="Private" />
            <SliderField id="education" label="Education Level (Numeric)" start={10} max={16} />
            <SelectField id="occupation" label="Occupation" value="Machine-op-inspct" />
            <SliderField id="hours" label="Hours per Week" start={40} max={99} />
            <SelectField id="country" label="Native Country" value="United-States" />
            <Rule />
            <Credit><TechEmoji /><b> : </b>Hiren Chauhan</Credit>
            <Credit><MailEmoji /><b> : </b><a href="mailto:Hinesh13@gmail.com">Hinesh13@gmail.com</a></Credit>
            <Credit><CapEmoji /><b> : </b>[AICTE B2_AI - (2025-26) ]</Credit>
          </Sidebar>
          <Main>
            <MainContent>
              <TwoColumns>
                <SummaryTable>
                  <tbody>
                    <tr><th scope="row">Hours per Week</th><td>40</td></tr>
                    <tr><th scope="row">Native Country</th><td>United-States</td></tr>
                  </tbody>
                </SummaryTable>
                <Metric>
                  <MetricLabel>Confidence Score</MetricLabel>
                  <MetricValue>69.34%</MetricValue>
                </Metric>
              </TwoColumns>
              <Expander open>
                <ExpanderTitle>
                  Show Data Preview
                  <Chevron up />
                </ExpanderTitle>
                <Intro>Here is a small preview of the dataset used for training the model:</Intro>
                <DataPreview />
              </Expander>
            </MainContent>
            <PageScroll>
              <Arrow dir="up" />
              <Track>
                <Spare $grow={261} />
                <Thumb $grow={289} />
                <Spare $grow={68} />
              </Track>
              <Arrow dir="down" />
            </PageScroll>
            <AppHeader>
              <HeaderButton>Deploy</HeaderButton>
              <HeaderButton aria-label="Main menu">
                <svg width="16" height="16" viewBox="0 0 16 16" aria-hidden="true">
                  <circle cx="8" cy="3" r="1.9" fill={ink} />
                  <circle cx="8" cy="8" r="1.9" fill={ink} />
                  <circle cx="8" cy="13" r="1.9" fill={ink} />
                </svg>
              </HeaderButton>
            </AppHeader>
            <Assistant aria-label="Assistant"><Brain /></Assistant>
          </Main>
        </PageColumns>
      </Page>
      <SystemBar />
    </Screen>
  );
}
